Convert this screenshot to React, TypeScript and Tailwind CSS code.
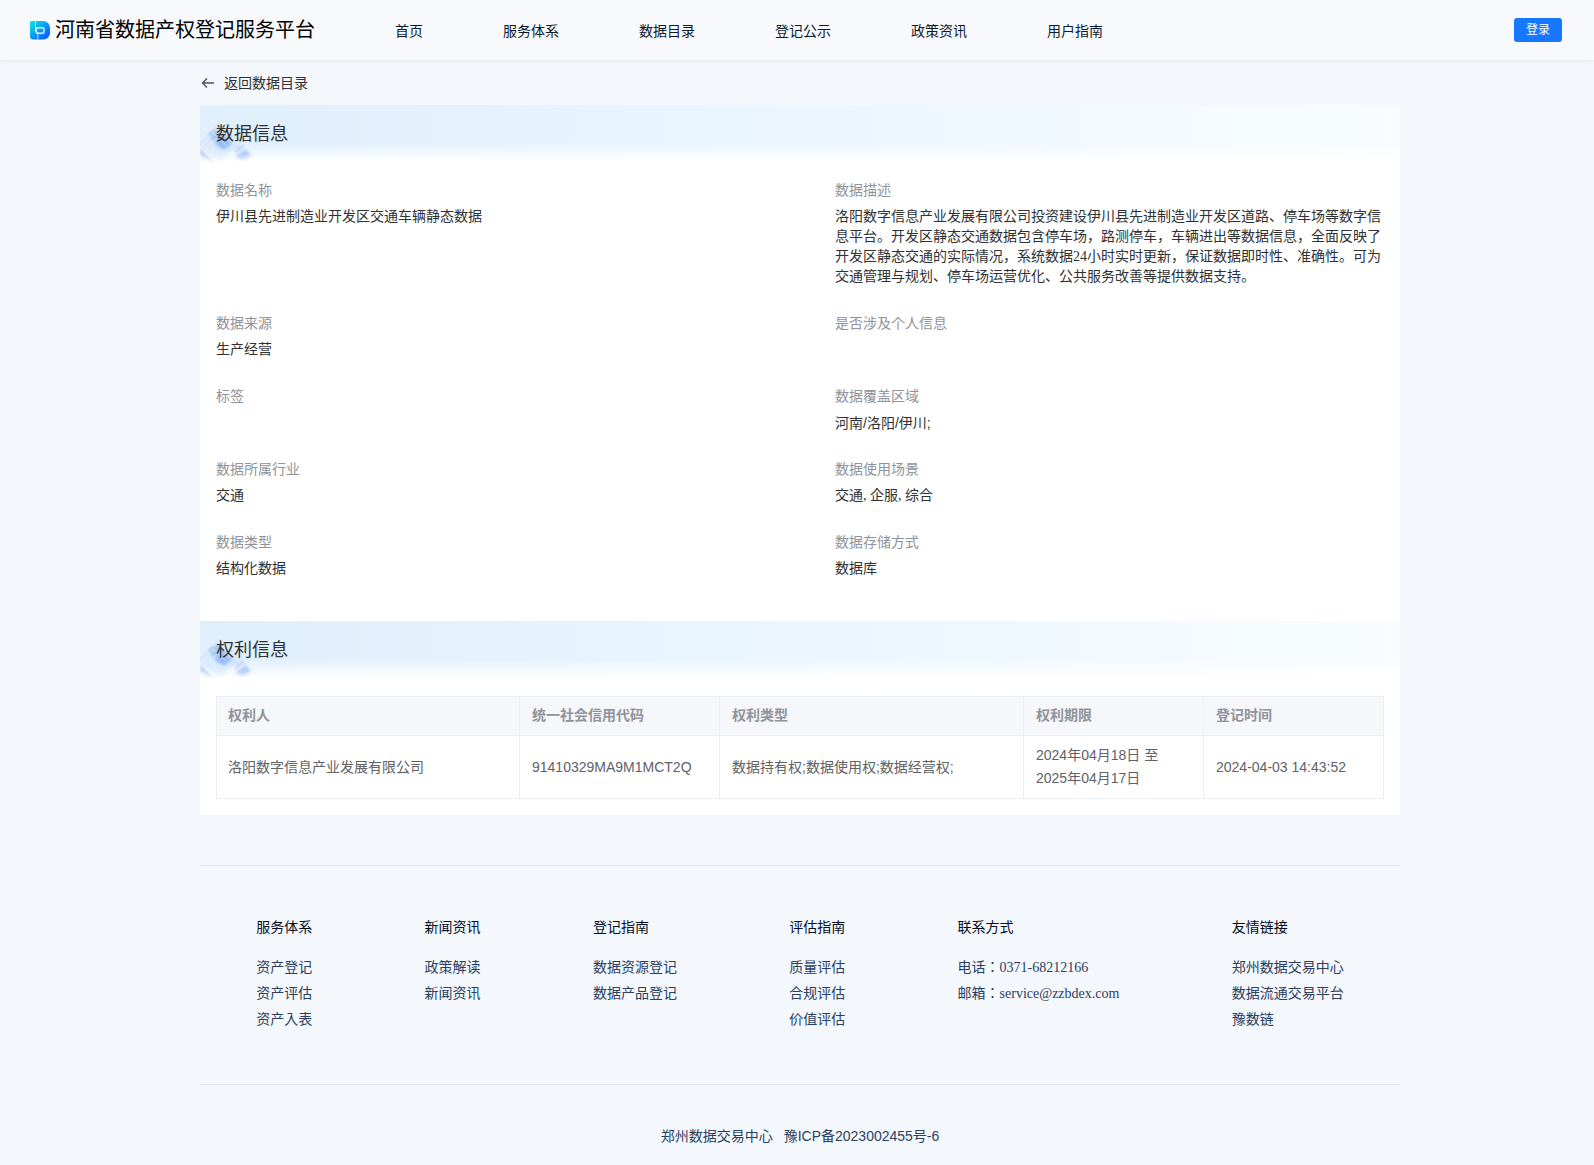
import React from "react";

const sans = "font-['Liberation_Sans','Noto_Sans_CJK_JP',sans-serif]";
const serif = "font-['Liberation_Serif','Noto_Sans_CJK_JP',serif]";

const nav = ["首页", "服务体系", "数据目录", "登记公示", "政策资讯", "用户指南"];

const fields = [
  { label: "数据名称", value: "伊川县先进制造业开发区交通车辆静态数据" },
  {
    label: "数据描述",
    value:
      "洛阳数字信息产业发展有限公司投资建设伊川县先进制造业开发区道路、停车场等数字信息平台。开发区静态交通数据包含停车场，路测停车，车辆进出等数据信息，全面反映了开发区静态交通的实际情况，系统数据24小时实时更新，保证数据即时性、准确性。可为交通管理与规划、停车场运营优化、公共服务改善等提供数据支持。",
  },
  { label: "数据来源", value: "生产经营" },
  { label: "是否涉及个人信息", value: "" },
  { label: "标签", value: "" },
  { label: "数据覆盖区域", value: "河南/洛阳/伊川;", sans: true },
  { label: "数据所属行业", value: "交通" },
  { label: "数据使用场景", value: "交通, 企服, 综合" },
  { label: "数据类型", value: "结构化数据" },
  { label: "数据存储方式", value: "数据库" },
];

const columns = ["权利人", "统一社会信用代码", "权利类型", "权利期限", "登记时间"];
const row = [
  "洛阳数字信息产业发展有限公司",
  "91410329MA9M1MCT2Q",
  "数据持有权;数据使用权;数据经营权;",
  "2024年04月18日 至 2025年04月17日",
  "2024-04-03 14:43:52",
];

const footer = [
  { title: "服务体系", items: ["资产登记", "资产评估", "资产入表"] },
  { title: "新闻资讯", items: ["政策解读", "新闻资讯"] },
  { title: "登记指南", items: ["数据资源登记", "数据产品登记"] },
  { title: "评估指南", items: ["质量评估", "合规评估", "价值评估"] },
  { title: "联系方式", items: ["电话：0371-68212166", "邮箱：service@zzbdex.com"] },
  { title: "友情链接", items: ["郑州数据交易中心", "数据流通交易平台", "豫数链"] },
];

function Logo() {
  return (
    <svg className="h-5 w-5" viewBox="0 0 20 20" fill="none">
      <defs>
        <linearGradient id="logo" x1="0" y1="1" x2="15" y2="19" gradientUnits="userSpaceOnUse">
          <stop stopColor="#12e6d8" />
          <stop offset="0.4" stopColor="#08b4f6" />
          <stop offset="1" stopColor="#0a5cff" />
        </linearGradient>
      </defs>
      <path d="M0 2.500a1.500 1.500 0 0 1 1.500-1.500H13a7 7 0 0 1 7 7v5a6.500 6.500 0 0 1-6.500 6.500H3.500A3.500 3.500 0 0 1 0 16z" fill="url(#logo)" />
      <path d="M5.500 1v9.500a2.700 2.700 0 0 0 2.500 2.700" stroke="#c4f0fc" strokeWidth="0.900" />
      <path d="M7.800 14v5.500" stroke="#d5ecff" strokeWidth="0.900" />
      <rect x="6.200" y="7.700" width="7.800" height="5.600" rx="1.600" stroke="#e6f8ff" strokeWidth="1.400" />
    </svg>
  );
}

function BannerArt() {
  return (
    <svg className="absolute top-0 left-0 h-15 w-16" viewBox="0 0 64 60" fill="none">
      <defs>
        <filter id="soft" x="-20%" y="-20%" width="140%" height="140%">
          <feGaussianBlur stdDeviation="1.600" />
        </filter>
        <linearGradient id="fade" x1="0" y1="0" x2="0" y2="60" gradientUnits="userSpaceOnUse">
          <stop offset="0.78" stopColor="white" />
          <stop offset="0.98" stopColor="black" />
        </linearGradient>
        <mask id="artmask">
          <rect width="64" height="60" fill="url(#fade)" />
        </mask>
      </defs>
      <g mask="url(#artmask)">
        <g filter="url(#soft)">
          <path d="M-4 38 19 17 42 36 20 57z" fill="#d6e7fc" opacity="0.7" />
          <path d="M9 27 18 24 28 32 20 38 11 35z" fill="#93bdf6" opacity="0.75" />
          <path d="M14 39 24 33 33 38 24 45z" fill="#82aff5" opacity="0.75" />
          <path d="M0 44 16 58H10L0 50z" fill="#9dbdf3" opacity="0.8" />
          <path d="M35 51 46 45 51 50 42 57z" fill="#8fb7f6" opacity="0.8" />
          <path d="M33 42 42 39 46 43 36 49z" fill="#b4d0fa" opacity="0.7" />
        </g>
        <path d="M-2 37 19 15 35 29M0 42 18 58M24 55 42 38M28 57 46 41" stroke="#f2f8ff" strokeWidth="1" opacity="0.7" />
        <path d="M2 40 14 29M5 43 17 33M12 27 26 40" stroke="#e6f1fe" strokeWidth="0.800" opacity="0.8" />
      </g>
    </svg>
  );
}

function Banner({ title }: { title: string }) {
  return (
    <div className="relative h-15 bg-linear-to-r from-[#dfeffc] via-[#ebf6ff] to-[#f9fdff]">
      <div className="absolute inset-x-0 bottom-0 h-[22px] bg-linear-to-b from-white/0 via-white/60 to-white to-85%" />
      <BannerArt />
      <h2 className={`relative px-4 pt-[17px] text-[18px] leading-6 text-[#303133] ${sans}`}>{title}</h2>
    </div>
  );
}

export default function App() {
  return (
    <div className={`min-h-[1165px] bg-[#f4f7fc] text-sm ${sans}`}>
      <header className="relative flex h-15 items-center bg-[#f7f9fd] pr-8 pl-[30px] shadow-[0_1px_4px_rgba(0,21,41,0.08)]">
        <Logo />
        <h1 className="ml-[5px] w-[260px] text-[20px] leading-[30px] whitespace-nowrap text-black">河南省数据产权登记服务平台</h1>
        <nav className="ml-20 flex gap-20 pt-0.5 leading-5 text-[#0b1a2c]">
          {nav.map((item) => (
            <a key={item}>{item}</a>
          ))}
        </nav>
        <button className="ml-auto h-6 w-12 rounded-[3px] bg-[#1677ff] pb-px text-xs leading-none text-white">登录</button>
      </header>

      <main className="ml-[200px] w-[1200px]">
        <div className="flex h-[45px] items-center text-[#303133]">
          <svg className="mr-2 h-4 w-4" viewBox="0 0 16 16" fill="none" stroke="#505255" strokeWidth="1.400">
            <path d="M14 8H3M7 3.500 2.500 8 7 12.500" />
          </svg>
          <span className="leading-5">返回数据目录</span>
        </div>

        <section className="bg-white pb-4">
          <Banner title="数据信息" />
          <div className="grid grid-cols-2 gap-x-[70px] px-4 pt-[15px] pb-4">
            {fields.map((f) => (
              <div key={f.label} className="min-h-[73px] pb-[26px] leading-5">
                <div className="text-[#909399]">{f.label}</div>
                <div className={f.sans ? `mt-[7px] text-[#303133] ${sans}` : `mt-[7px] text-[#303133] ${serif}`}>{f.value}</div>
              </div>
            ))}
          </div>

          <Banner title="权利信息" />
          <div className="px-4 pt-[15px]">
            <div className="border-t border-[#ebeef5]">
              <table className="w-full table-fixed border-separate border-spacing-0 text-left leading-[23px]">
                <colgroup>
                  <col className="w-[304px]" />
                  <col className="w-[200px]" />
                  <col className="w-[304px]" />
                  <col className="w-[180px]" />
                  <col className="w-[180px]" />
                </colgroup>
                <thead>
                  <tr>
                    {columns.map((c) => (
                      <th key={c} className="border-r border-b border-[#ebeef5] bg-[#f5f7fa] px-3 pt-[7px] pb-2 font-bold text-[#909399] first:border-l first:pl-[11px]">
                        {c}
                      </th>
                    ))}
                  </tr>
                </thead>
                <tbody>
                  <tr>
                    {row.map((c) => (
                      <td key={c} className="border-r border-b border-[#ebeef5] px-3 py-2 text-[#606266] first:border-l first:pl-[11px]">
                        {c}
                      </td>
                    ))}
                  </tr>
                </tbody>
              </table>
            </div>
          </div>
        </section>

        <footer className="mt-[50px] border-t border-[#e2e5ec]">
          <div className="flex h-[219px] justify-around border-b border-[#e2e5ec] pt-[51px] leading-5">
            {footer.map((col) => (
              <div key={col.title}>
                <h3 className="mb-[21px] text-[#060d1c]">{col.title}</h3>
                <ul className={`space-y-1.5 text-[#2a3f5f] ${serif}`}>
                  {col.items.map((item) => (
                    <li key={item}>{item}</li>
                  ))}
                </ul>
              </div>
            ))}
          </div>
          <div className="flex justify-center gap-[11px] pt-[41px] leading-5 text-[#2a3f5f]">
            <span>郑州数据交易中心</span>
            <span>豫ICP备2023002455号-6</span>
          </div>
        </footer>
      </main>
    </div>
  );
}
